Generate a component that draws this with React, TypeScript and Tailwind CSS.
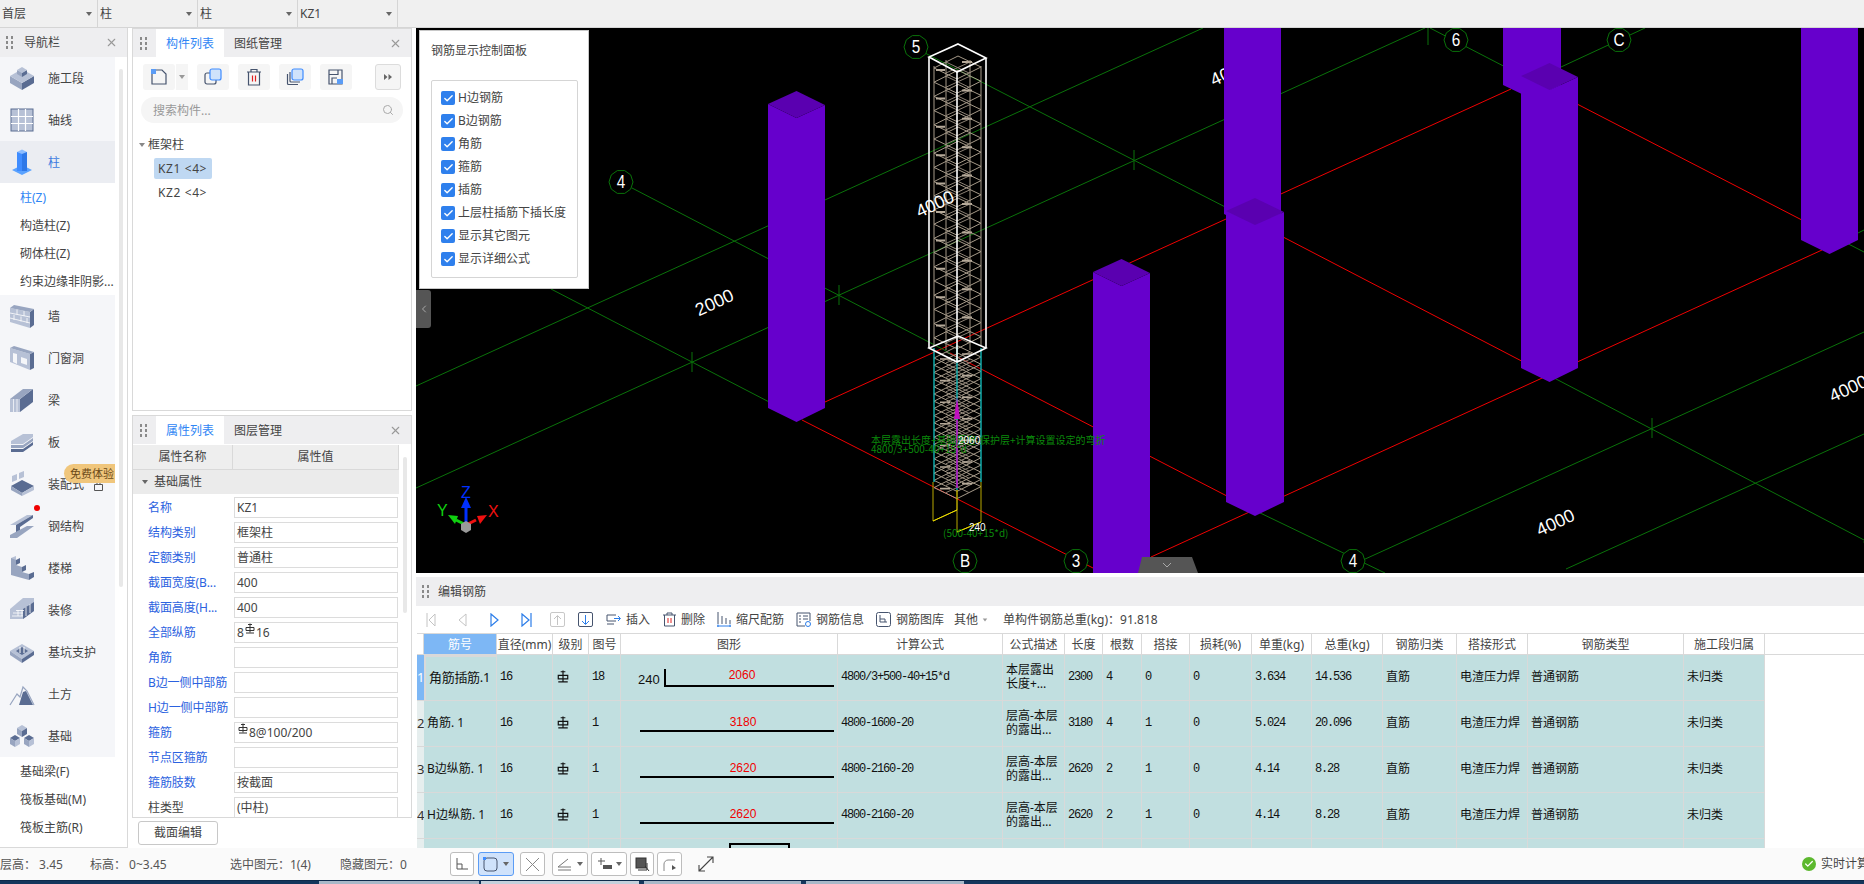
import React from 'react';
import { Check, ChevronLeft, Search, X } from 'lucide-react';

const mono = "font-['Liberation_Mono','Noto_Sans_CJK_SC',monospace] tracking-[-1.2px]";

const Caret = ({ className = '' }: { className?: string }) => (
  <span className={`inline-block w-0 h-0 border-x-[3.5px] border-x-transparent border-t-[4px] border-t-[#666] ${className}`} />
);

const Grip = () => (
  <span className="grid grid-cols-2 gap-x-[3px] gap-y-[2px] w-[7px] shrink-0">
    {[0, 1, 2, 3, 4, 5].map((i) => (
      <span key={i} className="w-[2px] h-[3px] bg-[#8a8a8a]" />
    ))}
  </span>
);

const Rebar = ({ big = false }: { big?: boolean }) => (
  <svg width={big ? 12 : 10} height={big ? 13 : 11} viewBox="0 0 10 11" className="inline-block align-[3px] mx-px">
    <path d="M1 4.5h8v3H1zM5 0.5v9M1 10h8M3 1.5h4" fill="none" stroke={big ? '#111' : '#333'} strokeWidth="1" />
  </svg>
);

// ---- nav icons ----
const L = '#b7c1d6';
const M = '#98a5c0';
const D = '#5a6c92';

const Poly = ({ p, f }: { p: string; f: string }) => <polygon points={p} fill={f} />;

const NavIcon = ({ name }: { name: string }) => {
  let body: React.ReactNode = null;
  if (name === '施工段') {
    body = (
      <>
        <Poly p="1,11 13,18 13,25 1,18" f={M} />
        <Poly p="13,18 25,11 25,18 13,25" f={D} />
        <Poly p="1,11 13,4 25,11 13,18" f={L} />
        <Poly p="8,5 13,8 13,12 8,9" f={M} />
        <Poly p="13,8 18,5 18,9 13,12" f={D} />
        <Poly p="8,5 13,2 18,5 13,8" f={L} />
      </>
    );
  } else if (name === '轴线') {
    body = (
      <>
        <rect x="2" y="2" width="22" height="22" fill={L} stroke={D} />
        <path d="M9.5 2v22M16.5 2v22M2 9.5h22M2 16.5h22" stroke="#fff" strokeWidth="1.2" />
      </>
    );
  } else if (name === '柱') {
    body = (
      <>
        <Poly p="3,21 13,16 23,21 13,26" f="#5aa2ff" />
        <rect x="8" y="3" width="5" height="19" fill="#3f8cff" />
        <rect x="13" y="3" width="5" height="19" fill="#2e78e8" />
        <Poly p="8,3 13,0.5 18,3 13,5" f="#8dbdff" />
      </>
    );
  } else if (name === '墙') {
    body = (
      <>
        <Poly p="1,5 21,9 21,25 1,19" f={L} />
        <Poly p="21,9 25,6 25,22 21,25" f={D} />
        <Poly p="1,5 5,2 25,6 21,9" f={M} />
        <path d="M1 10l20 4M1 15l20 5M8 6.5v5M15 8v5M5 12v5M12 13.5v5M18 15v5" stroke="#fff" strokeWidth=".8" />
      </>
    );
  } else if (name === '门窗洞') {
    body = (
      <>
        <Poly p="1,3 21,9 21,25 1,17" f={L} />
        <Poly p="21,9 25,7 25,23 21,25" f={D} />
        <Poly p="1,3 5,1 25,7 21,9" f={M} />
        <Poly p="4,8 8,9 8,19 4,17" f="#f5f6f9" />
        <Poly p="12,12 18,14 18,20 12,18" f="#f5f6f9" />
      </>
    );
  } else if (name === '梁') {
    body = (
      <>
        <Poly p="1,12 11,12 11,25 1,25" f={L} />
        <Poly p="11,12 24,2 24,15 11,25" f={D} />
        <Poly p="1,12 14,2 24,2 11,12" f={M} />
        <path d="M4.5 12v13M8 12v13" stroke="#fff" strokeWidth=".7" />
      </>
    );
  } else if (name === '板') {
    body = (
      <>
        <Poly p="2,12 14,5 24,5 24,8 14,15 2,15" f={L} />
        <Poly p="2,16 14,16 24,9 24,12 14,19 2,19" f={M} />
        <Poly p="2,20 14,20 24,13 24,16 14,23 2,23" f={D} />
      </>
    );
  } else if (name === '装配式') {
    body = (
      <>
        <Poly p="2,15 13,9 25,15 13,22" f={D} />
        <Poly p="2,15 13,22 13,25 2,19" f={M} />
        <Poly p="13,22 25,15 25,19 13,25" f={L} />
        <Poly p="3,5 8,3 8,9 3,11" f={L} />
        <Poly p="10,2 15,0 15,6 10,8" f={L} />
      </>
    );
  } else if (name === '钢结构') {
    body = (
      <>
        <Poly p="1,12 18,2 24,2 7,12" f={L} />
        <Poly p="7,12 24,2 24,5 11,14 11,22 7,22" f={D} />
        <Poly p="1,22 18,13 25,13 8,25 1,25" f={M} />
      </>
    );
  } else if (name === '楼梯') {
    body = (
      <>
        <Poly p="2,3 7,1 7,7 2,9" f={L} />
        <Poly p="2,3 2,20 20,25 20,19 13,17 13,12 7,10 7,5" f={M} />
        <Poly p="7,5 11,3 11,8 7,10" f={D} />
        <Poly p="13,12 17,10 17,15 13,17" f={D} />
        <Poly p="20,19 25,17 25,22 20,25" f={D} />
      </>
    );
  } else if (name === '装修') {
    body = (
      <>
        <Poly p="1,12 14,1 25,1 25,14 14,22 1,22" f={L} />
        <Poly p="14,12 25,5 25,14 14,22" f={D} />
        <path d="M4 16h10M7 13.5h8M3 19h11M9 13v6M13 13v6M17 10v9M21 7v9" stroke="#fff" strokeWidth=".8" />
      </>
    );
  } else if (name === '基坑支护') {
    body = (
      <>
        <Poly p="1,12 13,5 25,12 13,20" f={L} />
        <Poly p="1,12 13,20 13,24 1,16" f={M} />
        <Poly p="13,20 25,12 25,16 13,24" f={D} />
        <Poly p="7,12 13,8 19,12 13,16" f={D} />
        <path d="M11 8v6M15 8v6" stroke="#fff" strokeWidth="1" />
      </>
    );
  } else if (name === '土方') {
    body = (
      <>
        <path d="M1 24L8 13l3 3 3-10 4 4 7 14" fill="none" stroke={M} strokeWidth="1.2" />
        <Poly p="10,24 14,11 17,10 24,24" f={D} />
      </>
    );
  } else if (name === '基础') {
    body = (
      <>
        <Poly p="8,5 13,2 18,5 13,8" f={L} />
        <Poly p="8,5 13,8 13,14 8,11" f={M} />
        <Poly p="13,8 18,5 18,11 13,14" f={D} />
        <Poly p="1,15 6,12 11,15 6,18" f={D} />
        <Poly p="1,15 6,18 6,24 1,21" f={M} />
        <Poly p="6,18 11,15 11,21 6,24" f={L} />
        <Poly p="15,15 20,12 25,15 20,18" f={D} />
        <Poly p="15,15 20,18 20,24 15,21" f={M} />
        <Poly p="20,18 25,15 25,21 20,24" f={L} />
      </>
    );
  }
  return (
    <svg width="26" height="26" viewBox="0 0 26 26" className="shrink-0">
      {body}
    </svg>
  );
};

type NavEntry = { name: string; active?: boolean; subs?: { label: string; active?: boolean }[] };

const navEntries: NavEntry[] = [
  { name: '施工段' },
  { name: '轴线' },
  {
    name: '柱',
    active: true,
    subs: [{ label: '柱(Z)', active: true }, { label: '构造柱(Z)' }, { label: '砌体柱(Z)' }, { label: '约束边缘非阴影...' }],
  },
  { name: '墙' },
  { name: '门窗洞' },
  { name: '梁' },
  { name: '板' },
  { name: '装配式' },
  { name: '钢结构' },
  { name: '楼梯' },
  { name: '装修' },
  { name: '基坑支护' },
  { name: '土方' },
  {
    name: '基础',
    subs: [{ label: '基础梁(F)' }, { label: '筏板基础(M)' }, { label: '筏板主筋(R)' }],
  },
];

const NavPanel = () => (
  <div className="w-[128px] h-full shrink-0 border-r border-b border-[#d9d9d9] bg-white flex flex-col">
    <div className="h-[29px] shrink-0 bg-[#eeeef0] flex items-center pl-[6px] pr-[9px] text-[#444]">
      <Grip />
      <span className="ml-[11px] mt-[1px] flex-1">导航栏</span>
      <X size={13} color="#999" />
    </div>
    <div className="flex flex-1 min-h-0 overflow-hidden">
      <div className="w-[115px] shrink-0">
        {navEntries.map((n) => (
          <div key={n.name}>
            <div className={`relative h-[42px] flex items-center pl-[9px] ${n.active ? 'bg-[#ebedf2]' : 'bg-[#f5f6f9]'}`}>
              <NavIcon name={n.name} />
              <span className={`ml-[13px] mt-[2px] ${n.active ? 'text-[#3d7be0]' : 'text-[#444]'}`}>{n.name}</span>
              {n.name === '钢结构' && <span className="absolute left-[34px] top-[0px] w-[6px] h-[6px] rounded-full bg-[#f00000]" />}
              {n.name === '装配式' && (
                <>
                  <svg width="9" height="10" viewBox="0 0 9 10" fill="none" className="absolute left-[94px] top-[18px]">
                    <path d="M.5 3.5h8v6h-8zM3 3.5V.5h3v3" stroke="#555" />
                  </svg>
                  <span className="absolute right-0 top-[1px] w-[51px] h-[19px] rounded-l-full bg-[#f0c67c] pl-[6px] leading-[19px] text-[11px] text-[#6b4a18] whitespace-nowrap">
                    免费体验
                  </span>
                </>
              )}
            </div>
            {n.subs?.map((s) => (
              <div key={s.label} className={`h-[28px] pl-[20px] leading-[30px] whitespace-nowrap ${s.active ? 'text-[#2f86f5]' : 'text-[#444]'}`}>
                {s.label}
              </div>
            ))}
          </div>
        ))}
      </div>
      <div className="ml-[4px] mt-[12px] w-[4px] h-[518px] rounded bg-[#e8e8e8]" />
    </div>
  </div>
);

const ToolBox = ({ children, w = 32 }: { children: React.ReactNode; w?: number }) => (
  <span className="h-[26px] rounded-[3px] bg-[#f5f5f5] flex items-center justify-center" style={{ width: w }}>
    {children}
  </span>
);

const ComponentPanel = () => (
  <div className="h-[383px] shrink-0 border border-[#d9d9d9] bg-white flex flex-col">
    <div className="h-[28px] shrink-0 bg-[#eeeef0] flex items-center">
      <span className="ml-[7px] mr-[9px]"><Grip /></span>
      <span className="w-[68px] h-full bg-white text-[#2f86f5] flex items-center justify-center pt-[1px]">构件列表</span>
      <span className="w-[68px] text-center text-[#444] pt-[1px]">图纸管理</span>
      <span className="ml-auto mr-[9px]"><X size={13} color="#999" /></span>
    </div>
    <div className="flex items-center h-[26px] mt-[7px] pl-[10px]">
      <ToolBox>
        <svg width="18" height="18" viewBox="0 0 18 18" fill="none">
          <path d="M2 2h10l4 4v10H2z" stroke="#46546e" strokeWidth="1.2" />
          <rect x="1" y="1" width="5" height="5" fill="#5b9cf5" />
        </svg>
      </ToolBox>
      <span className="w-[12px] h-[26px] ml-px bg-[#f5f5f5] flex items-center justify-center"><Caret className="border-t-[#999]" /></span>
      <span className="ml-[9px]">
        <ToolBox>
          <svg width="18" height="18" viewBox="0 0 18 18" fill="none">
            <rect x="1" y="5" width="11" height="11" rx="2" stroke="#46546e" strokeWidth="1.2" />
            <rect x="6" y="1" width="11" height="11" rx="2" fill="#cfe2fb" stroke="#3f8cff" strokeWidth="1.2" />
          </svg>
        </ToolBox>
      </span>
      <span className="ml-[9px]">
        <ToolBox>
          <svg width="16" height="18" viewBox="0 0 16 18" fill="none">
            <path d="M1 4h14M5 4V1.5h6V4M2.5 4v13h11V4" stroke="#46546e" strokeWidth="1.2" />
            <path d="M6.5 7.5v6M9.5 7.5v6" stroke="#e02020" strokeWidth="1.2" />
          </svg>
        </ToolBox>
      </span>
      <span className="ml-[9px]">
        <ToolBox>
          <svg width="18" height="18" viewBox="0 0 18 18" fill="none">
            <rect x="6" y="1" width="11" height="11" rx="2" fill="#cfe2fb" stroke="#3f8cff" strokeWidth="1.2" />
            <path d="M4 4v9a1 1 0 001 1h9M1.5 6v9.5a1 1 0 001 1H12" stroke="#46546e" strokeWidth="1.2" />
          </svg>
        </ToolBox>
      </span>
      <span className="ml-[9px]">
        <ToolBox>
          <svg width="16" height="16" viewBox="0 0 16 16" fill="none">
            <path d="M1 1h13v14H1zM1 5.5h9V1M4 15v-6h5" stroke="#46546e" strokeWidth="1.2" />
            <rect x="9" y="10" width="6" height="5" fill="#5b9cf5" />
          </svg>
        </ToolBox>
      </span>
      <span className="ml-[23px] w-[26px] h-[26px] rounded-[3px] border border-[#dcdcdc] bg-[#f5f5f5] flex items-center justify-center">
        <svg width="8" height="6" viewBox="0 0 8 6"><path d="M0 0l3.5 3L0 6zM4.5 0L8 3 4.5 6z" fill="#666" /></svg>
      </span>
    </div>
    <div className="mx-[8px] mt-[7px] h-[26px] rounded-full bg-[#f5f5f5] flex items-center pl-[12px] pr-[9px] text-[#999]">
      <span className="flex-1 pt-[1px]">搜索构件...</span>
      <Search size={12} color="#aaa" />
    </div>
    <div className="flex items-center h-[18px] mt-[13px] pl-[6px] text-[#444]">
      <Caret className="border-t-[#888]" />
      <span className="ml-[3px]">框架柱</span>
    </div>
    <div className="ml-[21px] mt-[4px] w-[58px] h-[21px] rounded-[2px] bg-[#bfd8f2] pl-[4px] leading-[21px] text-[#444] whitespace-nowrap tracking-[0.6px]">KZ1 &lt;4&gt;</div>
    <div className="ml-[25px] mt-[4px] h-[20px] leading-[20px] text-[#444] whitespace-nowrap tracking-[0.6px]">KZ2 &lt;4&gt;</div>
  </div>
);

const propRows: { k: string; v: React.ReactNode; blue?: boolean }[] = [
  { k: '名称', v: 'KZ1', blue: true },
  { k: '结构类别', v: '框架柱', blue: true },
  { k: '定额类别', v: '普通柱', blue: true },
  { k: '截面宽度(B...', v: '400', blue: true },
  { k: '截面高度(H...', v: '400', blue: true },
  { k: '全部纵筋', v: <>8<Rebar />16</>, blue: true },
  { k: '角筋', v: '', blue: true },
  { k: 'B边一侧中部筋', v: '', blue: true },
  { k: 'H边一侧中部筋', v: '', blue: true },
  { k: '箍筋', v: <><Rebar />8@100/200</>, blue: true },
  { k: '节点区箍筋', v: '', blue: true },
  { k: '箍筋肢数', v: '按截面', blue: true },
  { k: '柱类型', v: '(中柱)' },
];

const PropertyPanel = () => (
  <div className="h-[403px] mt-[4px] shrink-0 border border-[#d9d9d9] bg-white flex flex-col overflow-hidden">
    <div className="h-[28px] shrink-0 bg-[#eeeef0] flex items-center">
      <span className="ml-[7px] mr-[9px]"><Grip /></span>
      <span className="w-[68px] h-full bg-white text-[#2f86f5] flex items-center justify-center pt-[1px]">属性列表</span>
      <span className="w-[68px] text-center text-[#444] pt-[1px]">图层管理</span>
      <span className="ml-auto mr-[9px]"><X size={13} color="#999" /></span>
    </div>
    <div className="flex flex-1 min-h-0">
      <div className="w-[266px] shrink-0">
        <div className="flex h-[25px] mt-[1px] bg-[#eeeeee] border-b border-r border-[#d9d9d9] text-[#444]">
          <span className="w-[100px] border-r border-[#d9d9d9] flex items-center justify-center">属性名称</span>
          <span className="flex-1 flex items-center justify-center">属性值</span>
        </div>
        <div className="flex items-center h-[24px] bg-[#ebebeb] pl-[9px] text-[#444]">
          <Caret />
          <span className="ml-[6px]">基础属性</span>
        </div>
        <div className="pt-[3px] flex flex-col gap-[4px]">
          {propRows.map((r) => (
            <div key={r.k} className="flex items-center h-[21px]">
              <span className={`w-[101px] pl-[15px] whitespace-nowrap tracking-[-0.1px] ${r.blue ? 'text-[#2b62e0]' : 'text-[#444]'}`}>{r.k}</span>
              <span className="w-[164px] h-[21px] border border-[#dcdcdc] pl-[2px] leading-[19px] text-[#444] whitespace-nowrap">{r.v}</span>
            </div>
          ))}
        </div>
      </div>
      <div className="ml-[4px] mt-[13px] w-[4px] h-[156px] rounded bg-[#e8e8e8]" />
    </div>
  </div>
);

// ---- 3d view ----
const GREEN = '#0a720a';
const RED = '#f00000';

const Seg = ({ d, c }: { d: [number, number, number, number]; c: string }) => (
  <line x1={d[0]} y1={d[1]} x2={d[2]} y2={d[3]} stroke={c} strokeWidth="1" />
);

const Bubble = ({ x, y, t }: { x: number; y: number; t: string }) => {
  const pts = Array.from({ length: 10 }, (_, i) => {
    const a = (i * Math.PI) / 5;
    return `${(x + 12 * Math.cos(a)).toFixed(1)},${(y + 12 * Math.sin(a)).toFixed(1)}`;
  }).join(' ');
  return (
    <g>
      <polygon points={pts} fill="#000" stroke={GREEN} />
      <text x={x} y={y + 6} textAnchor="middle" fontSize="18" fill="#fff" className="font-['Liberation_Sans',sans-serif]" transform={`translate(${x * 0.15} 0) scale(0.85 1)`}>
        {t}
      </text>
    </g>
  );
};

const Pillar = ({ l, r, top, bottom }: { l: number; r: number; top: number; bottom: number }) => {
  const c = (l + r) / 2;
  return (
    <g>
      <polygon points={`${l},${top + 13} ${c},${top + 27} ${r},${top + 14} ${r},${bottom} ${c},${bottom + 14} ${l},${bottom}`} fill="#6600cc" />
      <polygon points={`${l},${top + 13} ${c},${top} ${r},${top + 14} ${c},${top + 27}`} fill="#5a00b0" />
    </g>
  );
};

const Cross = ({ x, y }: { x: number; y: number }) => (
  <line x1={x} y1={y - 10} x2={x} y2={y + 10} stroke={GREEN} />
);

const Dim = ({ x, y, t }: { x: number; y: number; t: string }) => (
  <text x={x} y={y} textAnchor="middle" fontSize="18" fill="#fff" className="font-['Liberation_Sans',sans-serif]" transform={`rotate(-25 ${x} ${y})`}>
    {t}
  </text>
);

const stirrupsTop = Array.from({ length: 20 }, (_, i) => 56 + i * 14.2);
const stirrupsBottom = Array.from({ length: 19 }, (_, i) => 346 + i * 7.2);

const Scene = () => (
  <svg viewBox="416 28 1448 545" className="absolute inset-0 w-full h-full">
    <rect x="416" y="28" width="1448" height="545" fill="#000" />
    {/* grid up-right */}
    <Seg d={[416, 386, 1203, 28]} c={GREEN} />
    <Seg d={[416, 488, 1425, 28]} c={GREEN} />
    <Seg d={[825, 402, 1511, 89]} c={RED} />
    <Seg d={[1561, 67, 1645, 28]} c={GREEN} />
    <Seg d={[1151, 557, 1822, 250]} c={RED} />
    <Seg d={[1858, 233, 1864, 230]} c={GREEN} />
    <Seg d={[1363, 560, 1864, 332]} c={GREEN} />
    <Seg d={[1566, 569, 1864, 434]} c={GREEN} />
    {/* grid down-right */}
    <Seg d={[551, 289, 802, 419]} c={GREEN} />
    <Seg d={[802, 420, 1093, 568]} c={RED} />
    <Seg d={[632, 188, 950, 353]} c={GREEN} />
    <Seg d={[950, 353, 1254, 510]} c={RED} />
    <Seg d={[1254, 510, 1385, 573]} c={GREEN} />
    <Seg d={[925, 53, 1235, 212]} c={GREEN} />
    <Seg d={[1235, 212, 1535, 368]} c={RED} />
    <Seg d={[1535, 368, 1864, 540]} c={GREEN} />
    <Seg d={[1430, 28, 1515, 72]} c={GREEN} />
    <Seg d={[1515, 72, 1829, 234]} c={RED} />
    <Seg d={[1829, 234, 1864, 252]} c={GREEN} />
    <Cross x={839} y={295} />
    <Cross x={692} y={362} />
    <Cross x={1134} y={160} />
    <Cross x={1652} y={428} />
    <Cross x={1428} y={35} />
    <Dim x={717} y={308} t="2000" />
    <Dim x={1232} y={78} t="4000" />
    <Dim x={1558} y={528} t="4000" />
    <Dim x={1851} y={394} t="4000" />
    {/* pillars */}
    <Pillar l={768} r={825} top={91} bottom={408} />
    <Pillar l={1224} r={1281} top={-40} bottom={214} />
    <Pillar l={1226} r={1284} top={198} bottom={502} />
    <Pillar l={1093} r={1150} top={259} bottom={700} />
    <Pillar l={1503} r={1561} top={-40} bottom={85} />
    <Pillar l={1521} r={1578} top={63} bottom={368} />
    <Pillar l={1801} r={1858} top={-60} bottom={240} />
    <Bubble x={621} y={182} t="4" />
    <Bubble x={916} y={47} t="5" />
    <Bubble x={1456} y={40} t="6" />
    <Bubble x={1619} y={40} t="C" />
    <Bubble x={965} y={561} t="B" />
    <Bubble x={1076} y={561} t="3" />
    <Bubble x={1353} y={561} t="4" />
    <Bubble x={1876} y={542} t="" />
    {/* selected rebar cage */}
    <g stroke="#a69a89" fill="none" strokeWidth="1">
      {stirrupsTop.map((y, i) => (
        <g key={y}>
          <polygon points={`958,${y} 981,${y + 11} 957,${y + 23} 934,${y + 12}`} />
          <path d={`M946 ${y + 6}l23 11M970 ${y + 6}l-24 11`} stroke="#8c8174" />
          {i % 2 === 0 && <path d={`M936 ${y + 14}h9M962 ${y + 6}h10`} stroke="#b6aa9a" strokeWidth="2" />}
        </g>
      ))}
      {stirrupsBottom.map((y, i) => (
        <g key={y}>
          <polygon points={`958,${y} 981,${y + 11} 957,${y + 23} 934,${y + 12}`} />
          <path d={`M946 ${y + 6}l23 11M970 ${y + 6}l-24 11`} stroke="#8c8174" />
          {i % 3 === 0 && <path d={`M940 ${y + 13}h10M962 ${y + 8}h10`} stroke="#b6aa9a" strokeWidth="1.6" />}
        </g>
      ))}
      <path d="M934 66v280M981 66v280M946 60v290M970 60v290" />
    </g>
    <path d="M934 348v134M957 345v145M981 348v134" stroke="#12b5b5" strokeWidth="1.4" fill="none" />
    <path d="M933 482v39l24-11v-20M957 490v42l24-10v-40M933 521" stroke="#b8a800" fill="none" />
    <path d="M933 521l24-11M957 532l24-10" stroke="#f0e000" fill="none" />
    <path d="M957 420v68" stroke="#c010c0" strokeWidth="1.6" />
    <path d="M957 397l3 22h-6z" fill="#c010c0" />
    <g stroke="#fff" strokeWidth="1.6" fill="none">
      <polygon points="958,44 986,58 957,72 929,57" />
      <polygon points="958,336 986,348 957,362 929,348" />
      <path d="M929 57v291M986 58v290M957 72v290" />
    </g>
    <text x="935" y="210" textAnchor="middle" fontSize="18" fill="#fff" className="font-['Liberation_Sans',sans-serif]" transform="rotate(-25 935 204)">4000</text>
    <g fontSize="10" fill="#0b8a0b" className="font-['Noto_Sans_CJK_SC',sans-serif]">
      <text x="871" y="444">本层露出长度+基础厚度-保护层+计算设置设定的弯折</text>
      <text x="871" y="453">4800/3+500-40+15*d</text>
      <text x="943" y="537">(500-40+15*d)</text>
    </g>
    <g fontSize="10" fill="#fff" className="font-['Liberation_Sans',sans-serif]">
      <text x="958" y="444">2060</text>
      <text x="969" y="531">240</text>
    </g>
    {/* axis gizmo */}
    <path d="M466 524v-20" stroke="#0030ff" strokeWidth="3" />
    <path d="M466 497l5 11h-10z" fill="#0030ff" />
    <path d="M466 525l-10-5" stroke="#10d010" strokeWidth="3" />
    <path d="M448 515l10 1-3 8z" fill="#10d010" />
    <path d="M466 525l10-5" stroke="#f01010" strokeWidth="3" />
    <path d="M487 515l-10 1 3 8z" fill="#f01010" />
    <polygon points="461,524 466,521 471,524 471,530 466,533 461,530" fill="#9a9a9a" />
    <g fontSize="16" className="font-['Liberation_Sans',sans-serif]">
      <text x="461" y="498" fill="#0030ff">Z</text>
      <text x="437" y="516" fill="#10d010">Y</text>
      <text x="488" y="517" fill="#f01010">X</text>
    </g>
    {/* collapse tab */}
    <polygon points="1138,573 1142,557 1192,557 1198,573" fill="#555" />
    <path d="M1163 563l4 4 4-4" stroke="#aaa" fill="none" />
  </svg>
);

const checks = ['H边钢筋', 'B边钢筋', '角筋', '箍筋', '插筋', '上层柱插筋下插长度', '显示其它图元', '显示详细公式'];

const RebarDisplayPanel = () => (
  <div className="absolute left-[3px] top-[2px] w-[170px] h-[259px] bg-white border border-[#c8c8c8] px-[11px] pt-[11px]">
    <div className="text-[#444] leading-[18px]">钢筋显示控制面板</div>
    <div className="mt-[20px] w-[147px] h-[198px] border border-[#d5d5d5] rounded-[2px] pl-[9px] pt-[8px] flex flex-col gap-[5px]">
      {checks.map((c) => (
        <div key={c} className="flex items-center h-[18px]">
          <span className="w-[14px] h-[14px] rounded-[2px] bg-[#2f80ed] flex items-center justify-center shrink-0">
            <Check size={11} color="#fff" strokeWidth={3} />
          </span>
          <span className="ml-[3px] text-[#444] whitespace-nowrap">{c}</span>
        </div>
      ))}
    </div>
  </div>
);

// ---- rebar table ----
const cols = 'grid grid-cols-[7px_73px_56px_36px_32px_217px_165px_62px_38px_39px_48px_62px_60px_71px_74px_71px_156px_81px]';

const headers = ['筋号', '直径(mm)', '级别', '图号', '图形', '计算公式', '公式描述', '长度', '根数', '搭接', '损耗(%)', '单重(kg)', '总重(kg)', '钢筋归类', '搭接形式', '钢筋类型', '施工段归属'];

type RowData = {
  n: string;
  name: React.ReactNode;
  no: string;
  num: string;
  formula: string;
  desc: [string, string];
  len: string;
  count: string;
  lap: string;
  unit: string;
  total: string;
};

const rows: RowData[] = [
  { n: '1', name: '角筋插筋.1', no: '18', num: '2060', formula: '4800/3+500-40+15*d', desc: ['本层露出', '长度+…'], len: '2300', count: '4', lap: '0', unit: '3.634', total: '14.536' },
  { n: '2', name: '角筋. 1', no: '1', num: '3180', formula: '4800-1600-20', desc: ['层高-本层', '的露出…'], len: '3180', count: '4', lap: '1', unit: '5.024', total: '20.096' },
  { n: '3', name: 'B边纵筋. 1', no: '1', num: '2620', formula: '4800-2160-20', desc: ['层高-本层', '的露出…'], len: '2620', count: '2', lap: '1', unit: '4.14', total: '8.28' },
  { n: '4', name: 'H边纵筋. 1', no: '1', num: '2620', formula: '4800-2160-20', desc: ['层高-本层', '的露出…'], len: '2620', count: '2', lap: '1', unit: '4.14', total: '8.28' },
];

const Cell = ({ children, className = '' }: { children?: React.ReactNode; className?: string }) => (
  <div className={`border-r border-b border-[#d9d9d9] flex items-center pl-[3px] pb-[2px] overflow-hidden whitespace-nowrap text-[#111] ${className}`}>{children}</div>
);

const Shape = ({ r }: { r: RowData }) => (
  <svg width="216" height="45" viewBox="0 0 216 45" className="shrink-0">
    {r.no === '18' ? (
      <>
        <path d="M41 15v17h169" stroke="#000" strokeWidth="2" fill="none" />
        <text x="14" y="30" fontSize="13" fill="#111" className="font-['Liberation_Sans',sans-serif]">240</text>
      </>
    ) : (
      <line x1="16" y1="31" x2="210" y2="31" stroke="#000" strokeWidth="2" />
    )}
    <text x={r.no === '18' ? 118 : 119} y={r.no === '18' ? 25 : 26} textAnchor="middle" fontSize="12" fill="#f00000" className="font-['Liberation_Sans',sans-serif]">
      {r.num}
    </text>
  </svg>
);

const RebarTable = () => (
  <div className="flex-1 min-h-0 overflow-hidden ml-px">
    <div className={`${cols} h-[22px] border-t border-b border-[#d9d9d9] bg-white`}>
      <div className="border-r border-[#d9d9d9]" />
      {headers.map((h, i) => (
        <div key={h} className={`flex items-center justify-center border-r border-[#d9d9d9] whitespace-nowrap pt-[1px] ${i === 0 ? 'bg-[#7db7f5] text-white' : 'text-[#444]'}`}>
          {h}
        </div>
      ))}
    </div>
    <div className={`${cols} auto-rows-[46px] w-[1348px] bg-[#c1dfe0]`}>
      {rows.map((r, i) => (
        <React.Fragment key={r.n}>
          <div className={`border-b border-[#d9d9d9] text-[13px] flex items-center overflow-hidden ${i === 0 ? 'bg-[#7db7f5] text-white' : 'bg-[#e6eeee] text-[#333]'}`}>{r.n}</div>
          <Cell className={i === 0 ? 'border-2 border-[#808080] pl-[1px] text-[13px] tracking-[-0.3px]' : 'pl-[2px]'}>{r.name}</Cell>
          <Cell className={mono}>16</Cell>
          <Cell className="pl-[3px]"><Rebar big /></Cell>
          <Cell className={mono}>{r.no}</Cell>
          <Cell className="pl-0 pb-0"><Shape r={r} /></Cell>
          <Cell className={mono}>{r.formula}</Cell>
          <Cell className="leading-[14px]"><span>{r.desc[0]}<br />{r.desc[1]}</span></Cell>
          <Cell className={mono}>{r.len}</Cell>
          <Cell className={mono}>{r.count}</Cell>
          <Cell className={mono}>{r.lap}</Cell>
          <Cell className={mono}>0</Cell>
          <Cell className={mono}>{r.unit}</Cell>
          <Cell className={mono}>{r.total}</Cell>
          <Cell>直筋</Cell>
          <Cell>电渣压力焊</Cell>
          <Cell>普通钢筋</Cell>
          <Cell>未归类</Cell>
        </React.Fragment>
      ))}
      <div className="bg-[#e6eeee]" />
      <Cell />
      <Cell />
      <Cell />
      <Cell />
      <Cell className="pl-0 pb-0 items-start">
        <span className="ml-[105px] mt-[4px] w-[61px] h-[10px] border-t-2 border-x-2 border-black" />
      </Cell>
      {Array.from({ length: 12 }, (_, i) => (
        <Cell key={i} />
      ))}
    </div>
  </div>
);

const stroke = '#46546e';
const EditTool = ({ icon, label, className = '' }: { icon: React.ReactNode; label: string; className?: string }) => (
  <span className={`flex items-center whitespace-nowrap text-[#444] ${className}`}>
    {icon}
    <span className="ml-[5px]">{label}</span>
  </span>
);

const EditToolbar = () => (
  <div className="h-[27px] shrink-0 flex items-center pl-[10px]">
    <svg width="10" height="14" viewBox="0 0 10 14" fill="none"><path d="M1 0v14M9 1L3 7l6 6z" stroke="#c4c4c4" /></svg>
    <svg width="9" height="14" viewBox="0 0 9 14" fill="none" className="ml-[22px]"><path d="M8 1L1 7l7 6z" stroke="#c4c4c4" /></svg>
    <svg width="9" height="14" viewBox="0 0 9 14" fill="none" className="ml-[23px]"><path d="M1 1l7 6-7 6z" stroke="#2b7de9" strokeWidth="1.2" /></svg>
    <svg width="11" height="14" viewBox="0 0 11 14" fill="none" className="ml-[22px]"><path d="M1 1l7 6-7 6zM10 0v14" stroke="#2b7de9" strokeWidth="1.2" /></svg>
    <span className="ml-[18px] w-[15px] h-[15px] rounded-[2px] border border-[#c8c8c8] flex items-center justify-center">
      <svg width="9" height="10" viewBox="0 0 9 10" fill="none"><path d="M4.5 10V1M1 4l3.5-3.5L8 4" stroke="#c4c4c4" /></svg>
    </span>
    <span className="ml-[13px] w-[15px] h-[15px] rounded-[2px] border border-[#46546e] flex items-center justify-center">
      <svg width="9" height="10" viewBox="0 0 9 10" fill="none"><path d="M4.5 0v9M1 6l3.5 3.5L8 6" stroke="#2b7de9" /></svg>
    </span>
    <EditTool
      className="ml-[13px]"
      label="插入"
      icon={<svg width="15" height="12" viewBox="0 0 15 12" fill="none"><path d="M10 1H1v6h9M1 10h7" stroke={stroke} /><path d="M8 4.5h6M12 2l2.5 2.5L12 7" stroke="#2b7de9" /></svg>}
    />
    <EditTool
      className="ml-[13px]"
      label="删除"
      icon={<svg width="13" height="15" viewBox="0 0 13 15" fill="none"><path d="M0 3h13M4 3V1h5v2M1.5 3v11h10V3" stroke={stroke} /><path d="M5 6v5M8 6v5" stroke="#e02020" /></svg>}
    />
    <EditTool
      className="ml-[12px]"
      label="缩尺配筋"
      icon={<svg width="14" height="15" viewBox="0 0 14 15" fill="none"><path d="M1 0v12M5 4v8M9 6v6M13 8v4" stroke={stroke} /><path d="M0 14h14M1 12.5v3M13 12.5v3" stroke="#2b7de9" /></svg>}
    />
    <EditTool
      className="ml-[12px]"
      label="钢筋信息"
      icon={<svg width="15" height="15" viewBox="0 0 15 15" fill="none"><path d="M9 14H1V1h13v8M3 4h2M7 4h5M3 7h2M7 7h5M3 10h2" stroke={stroke} /><circle cx="12" cy="12" r="2.5" stroke="#2b7de9" /></svg>}
    />
    <EditTool
      className="ml-[12px]"
      label="钢筋图库"
      icon={<svg width="15" height="15" viewBox="0 0 15 15" fill="none"><rect x=".5" y=".5" width="14" height="14" rx="2" stroke={stroke} /><path d="M4 3v7h7M4 7h5v3" stroke={stroke} /></svg>}
    />
    <span className="ml-[10px] text-[#444]">其他</span>
    <Caret className="ml-[4px] border-t-[#999] scale-75" />
    <span className="ml-[15px] text-[#444] whitespace-nowrap">单构件钢筋总重(kg)：91.818</span>
  </div>
);

const BarBtn = ({ children, w = 24, on = false }: { children: React.ReactNode; w?: number; on?: boolean }) => (
  <span className={`h-[24px] rounded-[3px] border flex items-center justify-center shrink-0 ${on ? 'bg-[#cfe2fb] border-[#5b9cf5]' : 'bg-white border-[#bdbdbd]'}`} style={{ width: w }}>
    {children}
  </span>
);

const StatusBar = () => (
  <div className="h-[32px] shrink-0 bg-[#fafafa] flex items-center text-[#555] overflow-hidden">
    <span className="w-[90px] whitespace-nowrap pt-[1px]">层高： 3.45</span>
    <span className="w-[140px] whitespace-nowrap pt-[1px]">标高： 0~3.45</span>
    <span className="w-[110px] whitespace-nowrap pt-[1px]">选中图元：1(4)</span>
    <span className="w-[110px] whitespace-nowrap pt-[1px]">隐藏图元：0</span>
    <BarBtn>
      <svg width="14" height="14" viewBox="0 0 14 14" fill="none"><path d="M2 1v11h11M2 7h5v5" stroke="#555" /></svg>
    </BarBtn>
    <span className="ml-[4px]">
      <BarBtn w={36} on>
        <svg width="15" height="15" viewBox="0 0 15 15" fill="none"><rect x="1" y="1" width="13" height="13" rx="3" stroke="#46546e" /><rect x="0" y="0" width="3" height="3" fill="#3f8cff" /></svg>
        <Caret className="ml-[5px]" />
      </BarBtn>
    </span>
    <span className="ml-[6px]">
      <BarBtn w={25}>
        <svg width="15" height="15" viewBox="0 0 15 15" fill="none"><path d="M1 1l13 13M14 1L1 14" stroke="#888" /></svg>
      </BarBtn>
    </span>
    <span className="ml-[7px]">
      <BarBtn w={36}>
        <svg width="15" height="14" viewBox="0 0 15 14" fill="none"><path d="M1 10L11 2M1 10h13M1 13h13" stroke="#777" /></svg>
        <Caret className="ml-[5px]" />
      </BarBtn>
    </span>
    <span className="ml-[3px]">
      <BarBtn w={36}>
        <svg width="16" height="14" viewBox="0 0 16 14" fill="none"><path d="M4 1v7M1 4h7" stroke="#555" /><rect x="6" y="8" width="9" height="4" fill="#555" /></svg>
        <Caret className="ml-[3px]" />
      </BarBtn>
    </span>
    <span className="ml-[3px]">
      <BarBtn>
        <svg width="15" height="15" viewBox="0 0 15 15" fill="none"><rect x="1" y="1" width="10" height="10" fill="#555" stroke="#333" /><path d="M3 13h9v-7M10 9l4 5" stroke="#333" /></svg>
      </BarBtn>
    </span>
    <span className="ml-[3px]">
      <BarBtn w={25}>
        <svg width="15" height="15" viewBox="0 0 15 15" fill="none"><path d="M2 14V7c0-2 2-4 4-4h7" stroke="#888" /><path d="M10 8l4 3-4 2z" fill="#555" /></svg>
      </BarBtn>
    </span>
    <span className="ml-[16px]">
      <svg width="16" height="16" viewBox="0 0 16 16" fill="none" className="block">
        <path d="M1 15L15 1M9 1h6v6M1 9v6h6" stroke="#444" strokeWidth="1.1" />
      </svg>
    </span>
    <span className="ml-auto flex items-center w-[62px] shrink-0 whitespace-nowrap overflow-hidden">
      <span className="w-[14px] h-[14px] rounded-full bg-[#5cb82e] flex items-center justify-center shrink-0">
        <Check size={10} color="#fff" strokeWidth={3} />
      </span>
      <span className="ml-[5px] text-[#444]">实时计算</span>
    </span>
  </div>
);

const TaskBar = () => (
  <div className="h-[4px] shrink-0 bg-[#14365c] border-t border-[#0e2a4a] flex">
    <span className="ml-[319px] w-[160px] bg-[#a8b8c8]" />
    <span className="ml-[2px] w-[158px] bg-[#c4d0dc]" />
    <span className="ml-[5px] w-[157px] bg-[#a8b8c8]" />
    <span className="ml-[5px] w-[158px] bg-[#a8b8c8]" />
  </div>
);

export default function App() {
  return (
    <div className="w-[1864px] h-[884px] overflow-hidden flex flex-col bg-white text-xs font-['Noto_Sans','Noto_Sans_CJK_SC',sans-serif]">
      <div className="h-[28px] shrink-0 flex bg-[#f0f0f0] border-b border-[#d5d5d5] text-[#444]">
        {['首层', '柱', '柱', 'KZ1'].map((t, i) => (
          <div key={i} className={`flex items-center justify-between border-r border-[#d5d5d5] pr-[5px] pl-[2px] ${i === 0 ? 'w-[98px]' : 'w-[100px]'}`}>
            <span>{t}</span>
            <Caret />
          </div>
        ))}
      </div>
      <div className="h-[820px] shrink-0 flex">
        <NavPanel />
        <div className="w-[280px] ml-[4px] shrink-0 flex flex-col">
          <ComponentPanel />
          <PropertyPanel />
          <div className="ml-[6px] mt-[3px] w-[80px] h-[24px] rounded-[3px] border border-[#c8c8c8] flex items-center justify-center text-[#444]">截面编辑</div>
        </div>
        <div className="flex-1 min-w-0 ml-[4px] flex flex-col">
          <div className="relative h-[545px] shrink-0 overflow-hidden">
            <Scene />
            <RebarDisplayPanel />
            <div className="absolute left-0 top-[262px] w-[15px] h-[38px] bg-[#555] rounded-r-[3px] flex items-center justify-center">
              <ChevronLeft size={12} color="#aaa" />
            </div>
          </div>
          <div className="mt-[4px] flex-1 min-h-0 flex flex-col">
            <div className="h-[29px] shrink-0 bg-[#eeeef0] flex items-center pl-[6px] text-[#444]">
              <Grip />
              <span className="ml-[9px] pt-[1px]">编辑钢筋</span>
            </div>
            <EditToolbar />
            <RebarTable />
          </div>
        </div>
      </div>
      <StatusBar />
      <TaskBar />
    </div>
  );
}
